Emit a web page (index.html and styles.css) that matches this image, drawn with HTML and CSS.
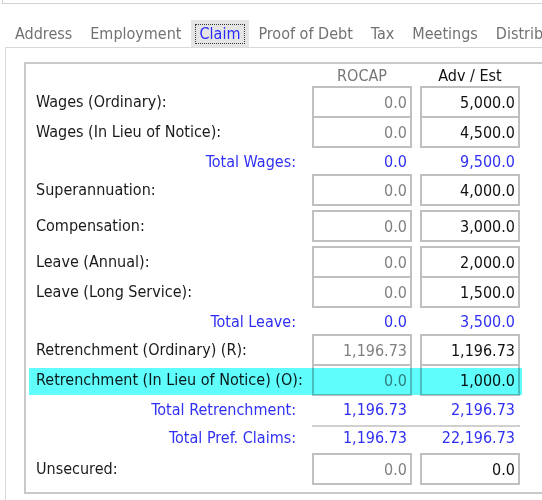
FILE: index.html
```html
<!DOCTYPE html>
<html>
<head>
<meta charset="utf-8">
<link rel="stylesheet" href="styles.css">
</head>
<body>
<div class="top"></div>
<div class="tabs">
  <div class="tab">Address</div>
  <div class="tab">Employment</div>
  <div class="tab active"><span class="focus">Claim</span></div>
  <div class="tab">Proof of Debt</div>
  <div class="tab">Tax</div>
  <div class="tab">Meetings</div>
  <div class="tab">Distribution</div>
</div>
<div class="panel">
  <div class="group">
    <div class="row head"><span></span><span class="colhead muted">ROCAP</span><span class="colhead">Adv / Est</span></div>

    <div class="row field"><span class="label">Wages (Ordinary):</span><span class="box ro">0.0</span><span class="box">5,000.0</span></div>
    <div class="row field"><span class="label">Wages (In Lieu of Notice):</span><span class="box ro">0.0</span><span class="box">4,500.0</span></div>
    <div class="row total"><span class="tlabel">Total Wages:</span><span class="tval">0.0</span><span class="tval">9,500.0</span></div>

    <div class="row field gap"><span class="label">Superannuation:</span><span class="box ro">0.0</span><span class="box">4,000.0</span></div>
    <div class="row field gap"><span class="label">Compensation:</span><span class="box ro">0.0</span><span class="box">3,000.0</span></div>

    <div class="row field"><span class="label">Leave (Annual):</span><span class="box ro">0.0</span><span class="box">2,000.0</span></div>
    <div class="row field"><span class="label">Leave (Long Service):</span><span class="box ro">0.0</span><span class="box">1,500.0</span></div>
    <div class="row total"><span class="tlabel">Total Leave:</span><span class="tval">0.0</span><span class="tval">3,500.0</span></div>

    <div class="row field"><span class="label">Retrenchment (Ordinary) (R):</span><span class="box ro">1,196.73</span><span class="box">1,196.73</span></div>
    <div class="row field selected"><span class="label">Retrenchment (In Lieu of Notice) (O):</span><span class="box ro">0.0</span><span class="box">1,000.0</span></div>
    <div class="row total"><span class="tlabel">Total Retrenchment:</span><span class="tval">1,196.73</span><span class="tval">2,196.73</span></div>

    <div class="row sep"><span></span><span class="rule"></span></div>
    <div class="row total pref"><span class="tlabel">Total Pref. Claims:</span><span class="tval">1,196.73</span><span class="tval">22,196.73</span></div>

    <div class="row field"><span class="label">Unsecured:</span><span class="box ro">0.0</span><span class="box">0.0</span></div>
  </div>
</div>
</body>
</html>
```

FILE: styles.css
```css
html, body {
  margin: 0;
  padding: 0;
  background: #ffffff;
}
body {
  width: 542px;
  height: 500px;
  overflow: hidden;
  font-family: "DejaVu Sans Condensed", "DejaVu Sans", sans-serif;
  font-size: 16px;
  color: #1a1a1a;
}
.top {
  height: 3px;
  width: 700px;
  margin-left: 2px;
  border-left: 1px solid #d2d2d2;
  border-bottom: 1px solid #d2d2d2;
}
.tabs {
  display: flex;
  align-items: flex-end;
  height: 43px;
  padding-left: 6px;
  width: 800px;
  white-space: nowrap;
}
.tab {
  height: 27px;
  padding: 0 9px;
  display: flex;
  align-items: center;
  color: #727272;
}
.tab.active {
  background: #e5e5e5;
  padding: 0 4px;
  color: #2b2bff;
}
.focus {
  border: 1px dotted #3a3a3a;
  padding: 0 4px;
  line-height: 18px;
}
.panel {
  margin-left: 5px;
  width: 700px;
  height: 500px;
  border-top: 1px solid #d9d9d9;
  border-left: 1px solid #d9d9d9;
  padding: 14px 0 0 18px;
  box-sizing: border-box;
}
.group {
  width: 650px;
  border: 2px solid #c9c9c9;
  border-right: none;
  padding: 0 0 9px 10px;
}
.row {
  display: grid;
  grid-template-columns: 268px 100px 100px;
  column-gap: 8px;
  align-items: center;
  position: relative;
}
.head {
  height: 22px;
  grid-template-rows: 22px;
}
.colhead {
  text-align: center;
  color: #111111;
  padding-top: 1px;
}
.colhead.muted {
  color: #767676;
}
.field {
  height: 30px;
  grid-template-rows: 30px;
}
.field.gap {
  margin-bottom: 6px;
}
.box {
  align-self: start;
  height: 32px;
  box-sizing: border-box;
  border: 2px solid #c0c0c0;
  display: flex;
  align-items: center;
  justify-content: flex-end;
  padding-right: 3px;
  background: #ffffff;
  color: #111111;
}
.box.ro {
  color: #808080;
}
.total {
  height: 28px;
  grid-template-rows: 28px;
  padding-top: 1px;
  box-sizing: border-box;
}
.total.pref {
  height: 25px;
  grid-template-rows: 25px;
  padding-top: 0;
  align-items: start;
}
.tlabel {
  text-align: right;
  padding-right: 8px;
  color: #3030f4;
}
.tval {
  text-align: right;
  padding-right: 5px;
  color: #3030f4;
}
.sep {
  height: 6px;
  grid-template-rows: 6px;
}
.rule {
  grid-column: 2 / 4;
  align-self: start;
  margin-top: 3px;
  height: 0;
  border-top: 2px solid #d0d0d0;
}
.selected::after {
  content: "";
  position: absolute;
  left: -7px;
  top: 4px;
  width: 493px;
  height: 27px;
  background: #60fdfd;
  mix-blend-mode: multiply;
}
```
